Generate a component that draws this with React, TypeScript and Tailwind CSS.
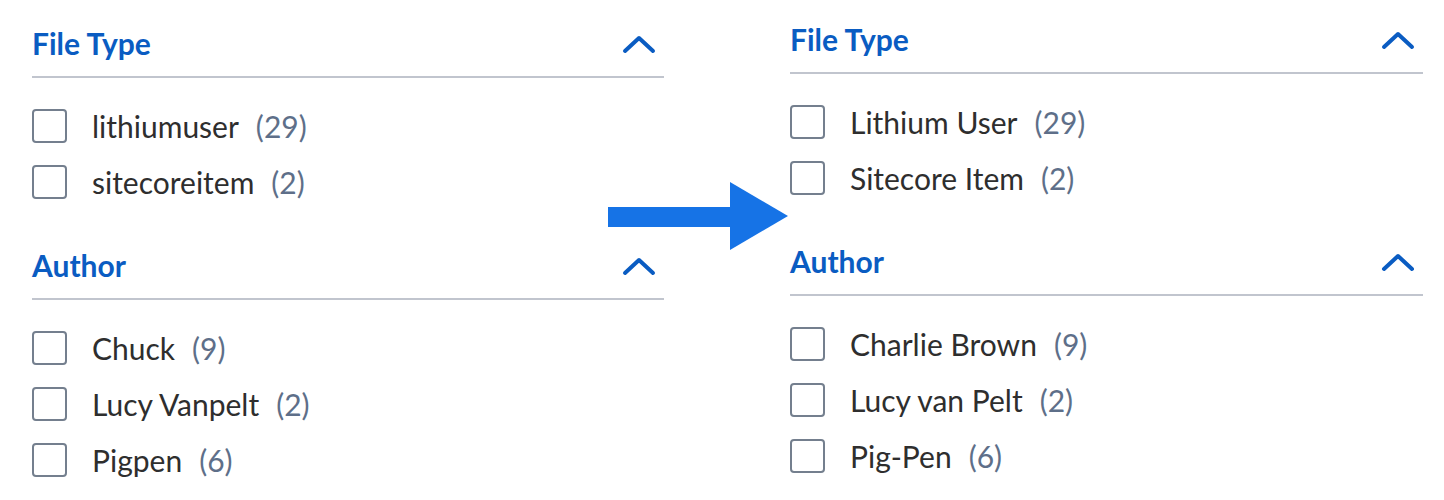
const fileTypeBefore = [
  { label: 'lithiumuser', count: 29 },
  { label: 'sitecoreitem', count: 2 },
];
const authorBefore = [
  { label: 'Chuck', count: 9 },
  { label: 'Lucy Vanpelt', count: 2 },
  { label: 'Pigpen', count: 6 },
];
const fileTypeAfter = [
  { label: 'Lithium User', count: 29 },
  { label: 'Sitecore Item', count: 2 },
];
const authorAfter = [
  { label: 'Charlie Brown', count: 9 },
  { label: 'Lucy van Pelt', count: 2 },
  { label: 'Pig-Pen', count: 6 },
];

type Item = { label: string; count: number };

function Chevron() {
  return (
    <svg width="34" height="20" viewBox="0 0 34 20" className="mr-[8px] mt-[2px]">
      <polyline
        points="3,17 17,4 31,17"
        fill="none"
        stroke="#0a5cc2"
        strokeWidth="4"
        strokeLinecap="round"
        strokeLinejoin="round"
      />
    </svg>
  );
}

function Facet({ title, items, last }: { title: string; items: Item[]; last?: boolean }) {
  return (
    <div className={last ? '' : 'mb-[39px]'}>
      <div className="flex items-center justify-between h-[32px] pb-[2px]">
        <h3 className="text-[30px] font-bold text-[#0a5cc2] leading-[32px]">{title}</h3>
        <Chevron />
      </div>
      <div className="mt-[16px] h-[2px] bg-[#c1c5ce]" />
      <ul className="mt-[21px]">
        {items.map((it) => (
          <li key={it.label} className="flex items-center h-[56px] pb-[2px]">
            <span className="w-[35px] h-[34px] rounded-[4px] border-2 border-[#747f8e] shrink-0" />
            <span className="ml-[25px] text-[30px] text-[#2e2e2e]">{it.label}</span>
            <span className="ml-[17px] text-[30px] text-[#5e6f89]">({it.count})</span>
          </li>
        ))}
      </ul>
    </div>
  );
}

export default function App() {
  return (
    <div className="w-[1444px] h-[500px] bg-white flex font-['Lato',sans-serif] overflow-hidden">
      <div className="ml-[32px] pt-[28px] w-[632px] shrink-0">
        <Facet title="File Type" items={fileTypeBefore} />
        <Facet title="Author" items={authorBefore} last />
      </div>
      <div className="-ml-[56px] mt-[182px] w-[181px] h-[68px] shrink-0">
        <svg width="181" height="68" viewBox="0 0 181 68">
          <rect x="0" y="25" width="124" height="20" fill="#1673e6" />
          <polygon points="122,0 180,34 122,68" fill="#1673e6" />
        </svg>
      </div>
      <div className="ml-[1px] pt-[24px] w-[633px] shrink-0">
        <Facet title="File Type" items={fileTypeAfter} />
        <Facet title="Author" items={authorAfter} last />
      </div>
    </div>
  );
}
